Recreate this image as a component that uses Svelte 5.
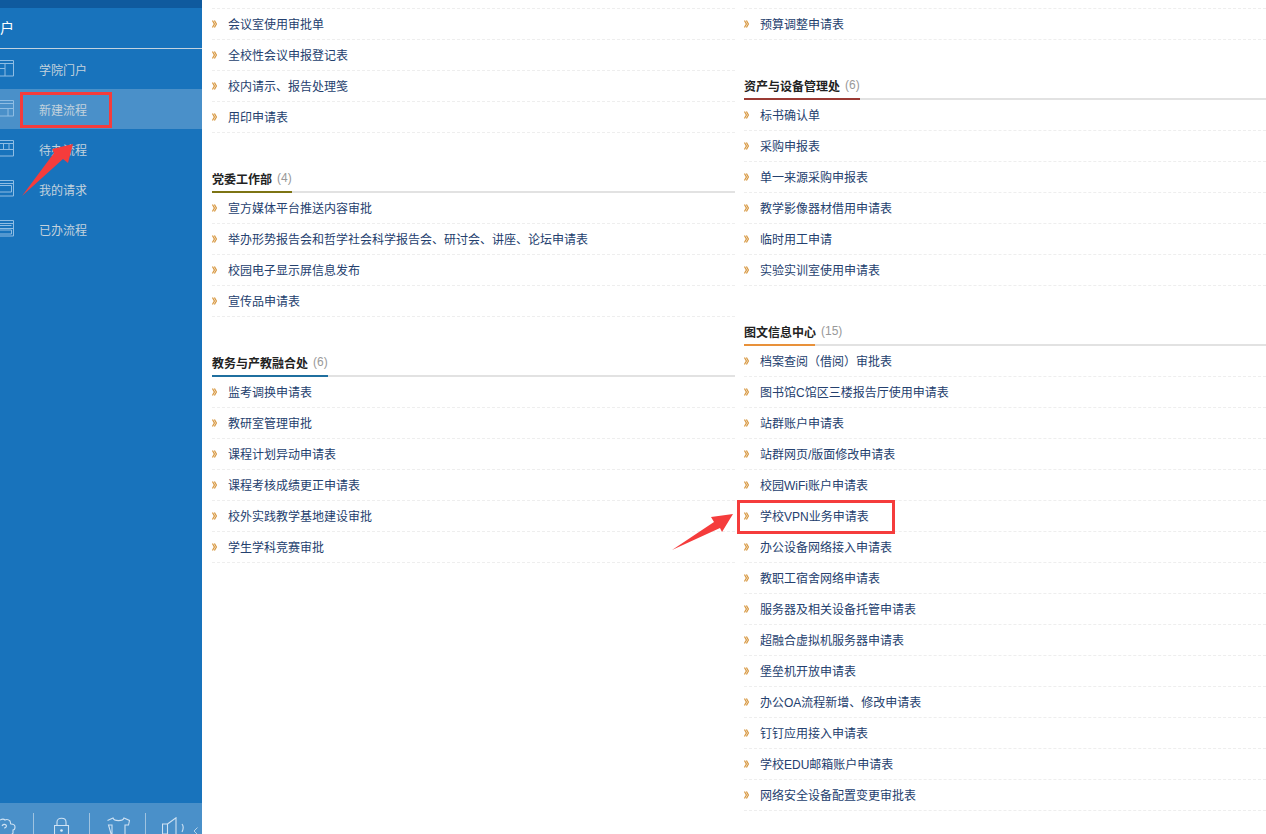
<script>
  const leftSections = [
    { rows: ['会议室使用审批单', '全校性会议申报登记表', '校内请示、报告处理笺', '用印申请表'] },
    { title: '党委工作部', count: 4, color: '#7d7414', width: 80, rows: ['宣方媒体平台推送内容审批', '举办形势报告会和哲学社会科学报告会、研讨会、讲座、论坛申请表', '校园电子显示屏信息发布', '宣传品申请表'] },
    { title: '教务与产教融合处', count: 6, color: '#1f6f9f', width: 116, rows: ['监考调换申请表', '教研室管理审批', '课程计划异动申请表', '课程考核成绩更正申请表', '校外实践教学基地建设审批', '学生学科竞赛审批'] }
  ];
  const rightSections = [
    { rows: ['预算调整申请表'] },
    { title: '资产与设备管理处', count: 6, color: '#9a3a34', width: 116, rows: ['标书确认单', '采购申报表', '单一来源采购申报表', '教学影像器材借用申请表', '临时用工申请', '实验实训室使用申请表'] },
    { title: '图文信息中心', count: 15, color: '#e8913a', width: 71, rows: ['档案查阅（借阅）审批表', '图书馆C馆区三楼报告厅使用申请表', '站群账户申请表', '站群网页/版面修改申请表', '校园WiFi账户申请表', '学校VPN业务申请表', '办公设备网络接入申请表', '教职工宿舍网络申请表', '服务器及相关设备托管申请表', '超融合虚拟机服务器申请表', '堡垒机开放申请表', '办公OA流程新增、修改申请表', '钉钉应用接入申请表', '学校EDU邮箱账户申请表', '网络安全设备配置变更审批表'] }
  ];
  // icons are cut by the left edge of the scrolled sidebar
  const menu = [
    { label: '学院门户', icon: 'M0 .5h13.500v15.500H0M0 3.500h13.500M5 3.500V16M0 8.500h5' },
    { label: '新建流程', icon: 'M0 .5h13.500v15.500H0M0 3.500h13.500M0 8.500h13.500M8 8.500V16', active: true },
    { label: '待办流程', icon: 'M0 .5h13.500v15.500H0M0 3.500h13.500M0 9.500h13.500M3.500 3.500v6M9 3.500v6' },
    { label: '我的请求', icon: 'M0 .5h13.500v15.500H0M0 3.500h13.500M0 5.500h11.500v6.500H0' },
    { label: '已办流程', icon: 'M0 .5h13.500v15.500H0M0 3.500h13.500M0 5.500h11.500M0 8.500h13.500M0 10h11.500v4H0' }
  ];
</script>

{#snippet sections(list)}
  {#each list as s}
    {#if s.title}
      <div class="head" style="--c:{s.color};--w:{s.width}px">
        <b>{s.title}</b><span>({s.count})</span>
      </div>
    {/if}
    <ul>
      {#each s.rows as r}
        <li>
          <svg class="chev" width="5" height="8" viewBox="0 0 5 8"><path d="M.4.5 2.400 4 .4 7.500M2.400.5 4.400 4 2.400 7.500" fill="none" stroke="#d89a45" stroke-width="1.300"/></svg>
          {r}
        </li>
      {/each}
    </ul>
  {/each}
{/snippet}

<div class="page">
  <aside>
    <div class="top"></div>
    <div class="title"><span>门户</span></div>
    <nav>
      {#each menu as m}
        <div class="item" class:active={m.active}>
          <svg width="14" height="17" viewBox="0 0 14 17"><path d={m.icon} fill="none" stroke="#8fbde3" stroke-width="1"/></svg>
          <span>{m.label}</span>
        </div>
      {/each}
    </nav>
    <div class="tools">
      <div class="tool first">
        <svg width="17" height="20" viewBox="0 0 17 20"><path d="M0 3c2-1 4-1 5 0 2-1 4 0 5 1 1 2 0 3 1 3 2 0 4 1 4 3 0 2-1 3-2 3v3c-1 2-3 2-4 2M2 9c1-2 3-2 4-1s0 3-2 3" fill="none" stroke="#cfe2f3" stroke-width="1.100"/></svg>
      </div>
      <div class="tool">
        <svg width="16" height="20" viewBox="0 0 16 20"><path d="M3 8V5c0-5 9-5 9 0v3M.5 8.500h14V20H.5z" fill="none" stroke="#cfe2f3" stroke-width="1.100"/><circle cx="7.500" cy="13.500" r="1.300" fill="#e4eff8"/></svg>
      </div>
      <div class="tool">
        <svg width="23" height="20" viewBox="0 0 23 20"><path d="M.5 3.500 6 1c1 3.500 10 3.500 11 0l5.500 2.500-1 4.500h-3.500v12M5 20V8H1.500z" fill="none" stroke="#cfe2f3" stroke-width="1.100"/></svg>
      </div>
      <div class="tool last">
        <svg width="23" height="22" viewBox="0 0 23 22"><path d="M.5 7h5v10h-5zM5.500 7 14 .8V22M20 7c1.500 2 1.500 5 0 8" fill="none" stroke="#cfe2f3" stroke-width="1.100"/></svg>
        <svg class="back" width="5" height="8" viewBox="0 0 5 8"><path d="M4.500.5 1 4l3.500 3.500" fill="none" stroke="#b9d4ea" stroke-width="1"/></svg>
      </div>
    </div>
  </aside>

  <main>
    <section>{@render sections(leftSections)}</section>
    <section>{@render sections(rightSections)}</section>
  </main>

  <!-- red annotations drawn over the screenshot -->
  <div class="mark mark-a"></div>
  <div class="mark mark-b"></div>
  <svg class="arrows" width="1266" height="834" viewBox="0 0 1266 834">
    <path d="M22 196 54 153 52 149 73 144 68 163 63 159z" fill="#f53c3c"/>
    <path d="M672 550 714 522 711 517 733 514 722 532 720 528z" fill="#f53c3c"/>
  </svg>
</div>

<style>
  :global(body) {
    margin: 0;
    background: #fff;
  }

  .page {
    position: relative;
    display: flex;
    width: 1266px;
    height: 834px;
    overflow: hidden;
    font-family: "Liberation Sans", "Noto Sans CJK SC", sans-serif;
  }

  aside {
    width: 202px;
    flex: none;
    display: flex;
    flex-direction: column;
    background: #1873bc;
    overflow: hidden;
  }

  .top {
    height: 8px;
    background: #0f5a9e;
  }

  .title {
    height: 40px;
    border-bottom: 1px solid #c3d3e0;
    display: flex;
    align-items: center;
    color: #fff;
    font-size: 14px;
  }

  .title span {
    margin-left: -14px;
    padding-bottom: 3px;
  }

  nav {
    flex: 1;
  }

  .item {
    height: 40px;
    display: flex;
    align-items: center;
    color: #c3d2dc;
    font-size: 12px;
  }

  .item svg {
    flex: none;
    margin-top: -2px;
  }

  .item span {
    margin-left: 25px;
  }

  .item.active {
    background: #4a90c9;
  }

  .tools {
    height: 31px;
    background: #4a90c9;
    display: flex;
    overflow: hidden;
  }

  .tool {
    width: 56px;
    flex: none;
    height: 21px;
    margin-top: 10px;
    box-sizing: border-box;
    border-right: 1px solid #9fc3e0;
    display: flex;
    justify-content: center;
    padding-left: 1px;
  }

  .tool svg {
    margin-top: 4px;
    flex: none;
  }

  .tool.first {
    width: 34px;
    justify-content: flex-start;
    padding-left: 0;
  }

  .tool.last {
    border-right: 0;
    justify-content: flex-start;
    padding-left: 16px;
    box-sizing: content-box;
  }

  .tool .back {
    margin: 14px 0 0 8px;
  }

  main {
    flex: 1;
    display: grid;
    grid-template-columns: 523px 522px;
    column-gap: 9px;
    padding: 8px 0 0 10px;
    align-items: start;
    min-width: 0;
  }

  ul {
    list-style: none;
    margin: 0;
    padding: 0;
    border-top: 1px dashed #eee;
  }

  .head + ul {
    border-top: 0;
  }

  li {
    height: 28px;
    padding-bottom: 2px;
    border-bottom: 1px dashed #eee;
    display: flex;
    align-items: center;
    font-size: 12px;
    color: #24406e;
    white-space: nowrap;
  }

  .chev {
    margin-right: 11px;
    flex: none;
    margin-top: 2px;
  }

  .head {
    margin-top: 34px;
    height: 22px;
    padding-bottom: 2px;
    border-bottom: 2px solid #e2e2e2;
    display: flex;
    align-items: center;
    gap: 5px;
    position: relative;
    font-size: 12px;
  }

  .head b {
    color: #222;
  }

  .head span {
    color: #999;
  }

  .head::after {
    content: "";
    position: absolute;
    left: 0;
    bottom: -2px;
    width: var(--w);
    height: 2px;
    background: var(--c);
  }

  .mark {
    position: absolute;
    border: 3px solid #f53c3c;
    box-sizing: border-box;
  }

  .mark-a {
    left: 20px;
    top: 92px;
    width: 92px;
    height: 36px;
  }

  .mark-b {
    left: 737px;
    top: 500px;
    width: 158px;
    height: 34px;
  }

  .arrows {
    position: absolute;
    left: 0;
    top: 0;
    pointer-events: none;
  }
</style>
